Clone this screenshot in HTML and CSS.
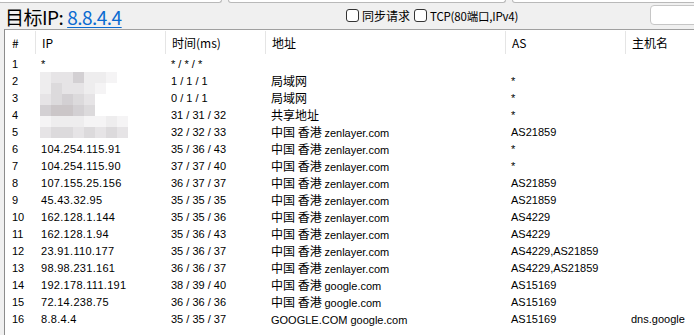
FILE: index.html
```html
<!DOCTYPE html>
<html lang="zh">
<head>
<meta charset="utf-8">
<link rel="stylesheet" href="styles.css">
</head>
<body>
<div class="app">
  <div class="topstrip">
    <div class="tbox b1"></div>
    <div class="tbox b2"></div>
    <div class="tbox b3"></div>
  </div>
  <div class="toolbar">
    <div class="title">目标IP: <a class="ip-link" href="#">8.8.4.4</a></div>
    <label class="chk"><span class="box"></span>同步请求</label>
    <label class="chk"><span class="box"></span><span class="tcp">TCP(80端口,IPv4)</span></label>
    <div class="input"></div>
  </div>
  <div class="table">
    <div class="row head">
      <div class="c n">#</div><div class="c ip">IP</div><div class="c t">时间(ms)</div><div class="c a">地址</div><div class="c as">AS</div><div class="c h">主机名</div>
    </div>
    <div class="body">
      <div class="mosaic">
        <div class="mr"><i class="s1"></i><i class="s2"></i><i class="s2"></i><i class="s4"></i><i class="s1"></i><i class="s1"></i><i class="s0"></i></div>
        <div class="mr"><i class="s1"></i><i class="s3"></i><i class="s2"></i><i class="s2"></i><i class="s1"></i><i class="s0"></i></div>
        <div class="mr"><i class="s2"></i><i class="s3"></i><i class="s4"></i><i class="s3"></i><i class="s2"></i></div>
        <div class="mr"><i class="s4"></i><i class="s5"></i><i class="s5"></i><i class="s4"></i><i class="s3"></i></div>
        <div class="mr"><i class="s0"></i><i class="s1"></i><i class="s1"></i><i class="s1"></i><i class="s0"></i><i class="s0"></i><i class="s1"></i><i class="s0"></i></div>
        <div class="mr"><i class="s2"></i><i class="s3"></i><i class="s3"></i><i class="s2"></i><i class="s3"></i><i class="s2"></i><i class="s3"></i><i class="s2"></i></div>
      </div>
      <div class="row"><div class="c n">1</div><div class="c ip">*</div><div class="c t">* / * / *</div><div class="c a"></div><div class="c as"></div><div class="c h"></div></div>
      <div class="row"><div class="c n">2</div><div class="c ip"></div><div class="c t">1 / 1 / 1</div><div class="c a">局域网</div><div class="c as">*</div><div class="c h"></div></div>
      <div class="row"><div class="c n">3</div><div class="c ip"></div><div class="c t">0 / 1 / 1</div><div class="c a">局域网</div><div class="c as">*</div><div class="c h"></div></div>
      <div class="row"><div class="c n">4</div><div class="c ip"></div><div class="c t">31 / 31 / 32</div><div class="c a">共享地址</div><div class="c as">*</div><div class="c h"></div></div>
      <div class="row"><div class="c n">5</div><div class="c ip"></div><div class="c t">32 / 32 / 33</div><div class="c a">中国 香港 <span class="lat">zenlayer.com</span></div><div class="c as">AS21859</div><div class="c h"></div></div>
      <div class="row"><div class="c n">6</div><div class="c ip">104.254.115.91</div><div class="c t">35 / 36 / 43</div><div class="c a">中国 香港 <span class="lat">zenlayer.com</span></div><div class="c as">*</div><div class="c h"></div></div>
      <div class="row"><div class="c n">7</div><div class="c ip">104.254.115.90</div><div class="c t">37 / 37 / 40</div><div class="c a">中国 香港 <span class="lat">zenlayer.com</span></div><div class="c as">*</div><div class="c h"></div></div>
      <div class="row"><div class="c n">8</div><div class="c ip">107.155.25.156</div><div class="c t">36 / 37 / 37</div><div class="c a">中国 香港 <span class="lat">zenlayer.com</span></div><div class="c as">AS21859</div><div class="c h"></div></div>
      <div class="row"><div class="c n">9</div><div class="c ip">45.43.32.95</div><div class="c t">35 / 35 / 35</div><div class="c a">中国 香港 <span class="lat">zenlayer.com</span></div><div class="c as">AS21859</div><div class="c h"></div></div>
      <div class="row"><div class="c n">10</div><div class="c ip">162.128.1.144</div><div class="c t">35 / 35 / 36</div><div class="c a">中国 香港 <span class="lat">zenlayer.com</span></div><div class="c as">AS4229</div><div class="c h"></div></div>
      <div class="row"><div class="c n">11</div><div class="c ip">162.128.1.94</div><div class="c t">35 / 36 / 43</div><div class="c a">中国 香港 <span class="lat">zenlayer.com</span></div><div class="c as">AS4229</div><div class="c h"></div></div>
      <div class="row"><div class="c n">12</div><div class="c ip">23.91.110.177</div><div class="c t">35 / 36 / 37</div><div class="c a">中国 香港 <span class="lat">zenlayer.com</span></div><div class="c as">AS4229,AS21859</div><div class="c h"></div></div>
      <div class="row"><div class="c n">13</div><div class="c ip">98.98.231.161</div><div class="c t">36 / 36 / 37</div><div class="c a">中国 香港 <span class="lat">zenlayer.com</span></div><div class="c as">AS4229,AS21859</div><div class="c h"></div></div>
      <div class="row"><div class="c n">14</div><div class="c ip">192.178.111.191</div><div class="c t">38 / 39 / 40</div><div class="c a">中国 香港 <span class="lat">google.com</span></div><div class="c as">AS15169</div><div class="c h"></div></div>
      <div class="row"><div class="c n">15</div><div class="c ip">72.14.238.75</div><div class="c t">36 / 36 / 36</div><div class="c a">中国 香港 <span class="lat">google.com</span></div><div class="c as">AS15169</div><div class="c h"></div></div>
      <div class="row"><div class="c n">16</div><div class="c ip">8.8.4.4</div><div class="c t">35 / 35 / 37</div><div class="c a"><span class="lat">GOOGLE.COM google.com</span></div><div class="c as">AS15169</div><div class="c h">dns.google</div></div>
    </div>
  </div>
</div>
</body>
</html>
```

FILE: styles.css
```css
html, body {
  margin: 0;
  padding: 0;
  background: #f0f0f0;
}
.app {
  width: 694px;
  height: 335px;
  overflow: hidden;
  background: #f0f0f0;
  font-family: "Liberation Sans", "Noto Sans CJK SC", sans-serif;
  color: #000;
}
.topstrip {
  height: 4px;
  display: flex;
  position: relative;
}
.tbox {
  height: 3px;
  margin-top: -1px;
  background: #fff;
  border: 1px solid #b9b9b9;
  border-top: none;
  border-radius: 0 0 3px 3px;
}
.b1 { width: 222px; margin-left: -2px; }
.b2 { width: 276px; margin-left: 6px; }
.b3 { flex: 1; margin-left: 6px; margin-right: -3px; }
.toolbar {
  height: 25px;
  display: flex;
  align-items: center;
}
.title {
  font-family: "Noto Sans CJK SC", sans-serif;
  font-size: 19px;
  line-height: 25px;
  margin-left: 5px;
  width: 335px;
  letter-spacing: -0.5px;
}
.ip-link {
  color: #0a6ad0;
  text-decoration: underline;
  text-underline-offset: 2px;
}
.chk {
  display: flex;
  align-items: center;
  font-family: "Noto Sans CJK SC", sans-serif;
  font-size: 12px;
  margin-left: 6px;
  margin-top: -2px;
}
.chk + .chk { margin-left: 4px; }
.box {
  width: 11px;
  height: 11px;
  border: 1px solid #333;
  border-radius: 3px;
  background: #fff;
  margin-right: 3px;
}
.tcp { font-size: 11.5px; letter-spacing: -0.2px; }
.input {
  margin-left: auto;
  width: 50px;
  height: 18px;
  margin-right: -8px;
  margin-top: -3px;
  background: #fff;
  border: 1px solid #c6c6c6;
  border-radius: 4px;
}
.table {
  margin-left: 4px;
  height: 306px;
  background: #fff;
  border-left: 1px solid #8c8c8c;
  border-top: 1px solid #a0a0a0;
  font-family: "Liberation Sans", "Noto Sans CJK SC", sans-serif;
  font-size: 11px;
}
.row {
  display: flex;
  height: 17px;
  align-items: center;
}
.row.head {
  height: 25px;
  font-family: "Noto Sans CJK SC", sans-serif;
  font-size: 12px;
}
.head .c {
  height: 23px;
  display: flex;
  align-items: center;
  border-left: 1px solid #e5e5e5;
}
.head .c.n { border-left: none; }
.c {
  box-sizing: border-box;
  padding-left: 6px;
  white-space: nowrap;
  overflow: hidden;
}
.n { width: 30px; padding-left: 7px; }
.ip { width: 130px; letter-spacing: 0.3px; }
.t { width: 100px; }
.a { width: 240px; font-family: "Noto Sans CJK SC", sans-serif; font-size: 12px; }
.as { width: 120px; }
.h { flex: 1; }
.head .n { padding-left: 7px; }
.head .ip { letter-spacing: 0; }
.lat { font-family: "Liberation Sans", sans-serif; font-size: 11px; }
.body {
  position: relative;
  padding-top: 0;
}
.mosaic {
  position: absolute;
  left: 35px;
  top: 17px;
  display: flex;
  flex-direction: column;
}
.mr { display: flex; height: 11px; }
.mr i { display: block; width: 11px; height: 11px; }
.s0 { background: #f5f4f5; }
.s1 { background: #eeedee; }
.s2 { background: #e6e4e6; }
.s3 { background: #dcdadc; }
.s4 { background: #d3d0d3; }
.s5 { background: #cbc6c8; }
```
